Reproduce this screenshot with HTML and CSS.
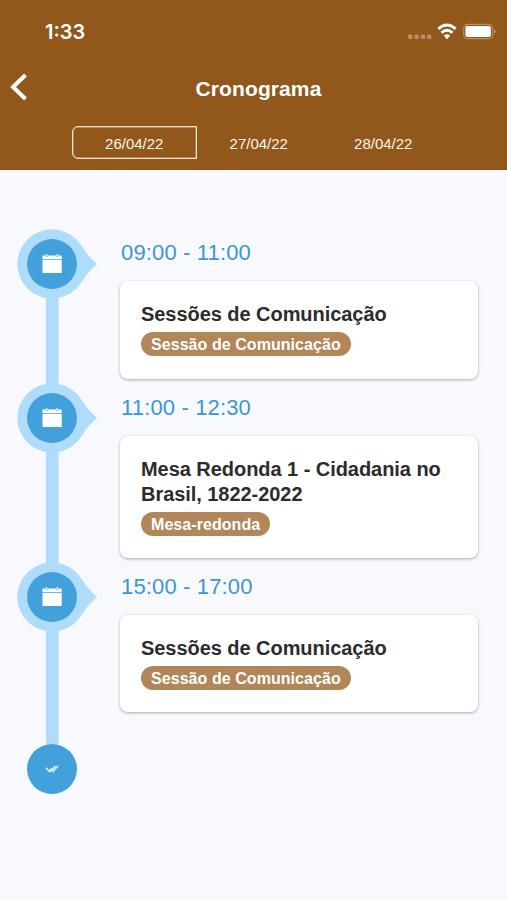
FILE: index.html
```html
<!DOCTYPE html>
<html lang="pt-BR">
<head>
<meta charset="utf-8">
<meta name="viewport" content="width=device-width, initial-scale=1">
<title>Cronograma</title>
<link rel="stylesheet" href="styles.css">
</head>
<body>
<svg class="defs" aria-hidden="true">
  <symbol id="calendar" viewBox="0 0 80 70">
    <path class="halo" d="M65.500 17.500Q68.500 24 73 28.200L80 35L73 41.800Q68.500 46 65.500 52.500Z"/>
    <circle class="halo" cx="35" cy="35" r="34.700"/>
    <circle class="disc" cx="35" cy="35" r="25"/>
    <path class="glyph" d="M25.500 26.500H28.800V25.200H30.200V26.500H39.500V25.200H41V26.500H44.700V30.300H25.500ZM25.500 31H44.700V44H25.500Z"/>
    <path class="rings" d="M28.500 26.200Q29.200 29 31 27.200M39 26.200Q39.700 29 41.500 27.200"/>
  </symbol>
</svg>
<header class="header">
  <div class="status">
    <span class="clock">1:33</span>
    <svg class="indicators" width="90" height="20" viewBox="0 0 90 20">
      <g class="dots"><rect x="1" y="12.500" width="4.500" height="4.500" rx="1.500"/><rect x="7.400" y="12.500" width="4.500" height="4.500" rx="1.500"/><rect x="13.700" y="12.500" width="4.500" height="4.500" rx="1.500"/><rect x="20" y="12.500" width="4.500" height="4.500" rx="1.500"/></g>
      <g class="wifi"><path d="M31.300 6.900Q40 -.900 48.700 6.900"/><path d="M34.500 10.700Q40 5.700 45.500 10.700"/></g>
      <path class="fill" d="M36.900 13.700Q40 11 43.100 13.700L40 17.200Z"/>
      <rect class="battery" x="56.700" y="2.400" width="29" height="14.300" rx="4"/>
      <rect class="fill" x="58.400" y="4.100" width="25.500" height="10.900" rx="2"/>
      <path class="nub" d="M87 7.300Q90.500 9.500 87 11.700Z"/>
    </svg>
  </div>
  <div class="navbar">
    <svg class="back" width="20" height="28" viewBox="0 0 20 28"><path d="M16.500 2L4 14L16.500 26"/></svg>
    <h1 class="title">Cronograma</h1>
  </div>
  <nav class="tabs">
    <span class="tab active">26/04/22</span>
    <span class="tab">27/04/22</span>
    <span class="tab">28/04/22</span>
  </nav>
</header>
<main class="timeline">
  <section class="item">
    <div class="rail"><svg class="marker"><use href="#calendar"/></svg></div>
    <div class="content">
      <div class="time">09:00 - 11:00</div>
      <article class="card"><h2 class="name">Sessões de Comunicação</h2><span class="tag">Sessão de Comunicação</span></article>
    </div>
  </section>
  <section class="item">
    <div class="rail"><svg class="marker"><use href="#calendar"/></svg></div>
    <div class="content">
      <div class="time">11:00 - 12:30</div>
      <article class="card tall"><h2 class="name">Mesa Redonda 1 - Cidadania no<br>Brasil, 1822-2022</h2><span class="tag">Mesa-redonda</span></article>
    </div>
  </section>
  <section class="item last">
    <div class="rail"><svg class="marker"><use href="#calendar"/></svg></div>
    <div class="content">
      <div class="time">15:00 - 17:00</div>
      <article class="card"><h2 class="name">Sessões de Comunicação</h2><span class="tag">Sessão de Comunicação</span></article>
    </div>
  </section>
  <svg class="end" width="50" height="50" viewBox="0 0 50 50">
    <circle class="disc" cx="25" cy="25" r="25"/>
    <path class="checks" d="M19 23.800L22.700 27.700L28.500 22.200M23.200 24.600L25.800 27.500L31.300 21.700"/>
  </svg>
</main>
</body>
</html>
```
FILE: styles.css
```css
* { box-sizing: border-box; }
body {
  margin: 0;
  min-height: 900px;
  background: #f8f9ff;
  font-family: "Liberation Sans", Arial, sans-serif;
}
.defs { display: block; width: 0; height: 0; }
.header {
  height: 170px;
  background: #91571b;
  color: #fff;
}
.status {
  display: flex;
  justify-content: space-between;
  height: 64px;
  padding: 20px 10px 0 45px;
}
.clock { font: 600 20px/24px Inter, sans-serif; }
.indicators { margin-top: 2px; }
.dots, .nub { fill: #b98f66; }
.wifi { fill: none; stroke: #fff; stroke-width: 2.9; }
.fill { fill: #fff; }
.battery { fill: none; stroke: #b98f66; stroke-width: 1.2; }
.navbar {
  display: grid;
  grid-template-columns: 40px 1fr 30px;
  height: 62px;
}
.back { margin: 9px 0 0 9px; fill: none; stroke: #fff; stroke-width: 4; }
.title {
  margin: 12px 0 0;
  font-size: 21px;
  line-height: 26px;
  letter-spacing: .1px;
  text-align: center;
}
.tabs {
  display: grid;
  grid-template-columns: repeat(3, 124.500px);
  height: 33px;
  margin-left: 72px;
}
.tab {
  display: flex;
  align-items: center;
  justify-content: center;
  padding-top: 2px;
  font-size: 15px;
  color: #fff5e9;
}
.active {
  border: 1px solid #f5e3cf;
  border-radius: 6px 0 0 6px;
  box-shadow: inset 0 0 0 .5px #d9b992;
}
.timeline { padding: 59px 29px 0 17px; }
.item {
  display: grid;
  grid-template-columns: 103px 1fr;
  height: 154.500px;
}
.item:nth-child(2) { height: 179px; }
.item.last { height: 181.500px; }
.rail { background: linear-gradient(#afdcfa, #afdcfa) 29px 0 / 12.500px 100% no-repeat; }
.item:first-child .rail { background-position: 29px 35px; }
.marker { display: block; width: 80px; height: 70px; }
.item + .item .marker { margin-top: -1px; }
.halo { fill: #afdcfa; }
.disc { fill: #42a1da; }
.glyph { fill: #fff; }
.rings { fill: none; stroke: #80bfe6; stroke-width: .9; }
.time {
  height: 52px;
  padding: 11px 0 0 1px;
  color: #3b96d2;
  font-size: 22px;
  line-height: 26px;
  letter-spacing: .15px;
  white-space: nowrap;
}
.card {
  height: 97.500px;
  padding: 21px 20px 0 21px;
  background: #fff;
  border-radius: 8px;
  box-shadow: 0 1px 3px rgba(0, 0, 0, .32);
}
.tall { height: 122.500px; }
.name {
  margin: 0;
  color: #2c2c2e;
  font-size: 20px;
  line-height: 25px;
  letter-spacing: -.05px;
  white-space: nowrap;
}
.tag {
  display: block;
  width: fit-content;
  height: 24px;
  margin-top: 5px;
  padding: 0 10px;
  border-radius: 12px;
  background: #b18658;
  color: #fff;
  font-size: 16px;
  font-weight: 700;
  line-height: 25px;
  letter-spacing: .06px;
}
.end { display: block; margin-left: 10px; }
.checks { fill: none; stroke: #d8f0fc; stroke-width: 1.600; }
```
